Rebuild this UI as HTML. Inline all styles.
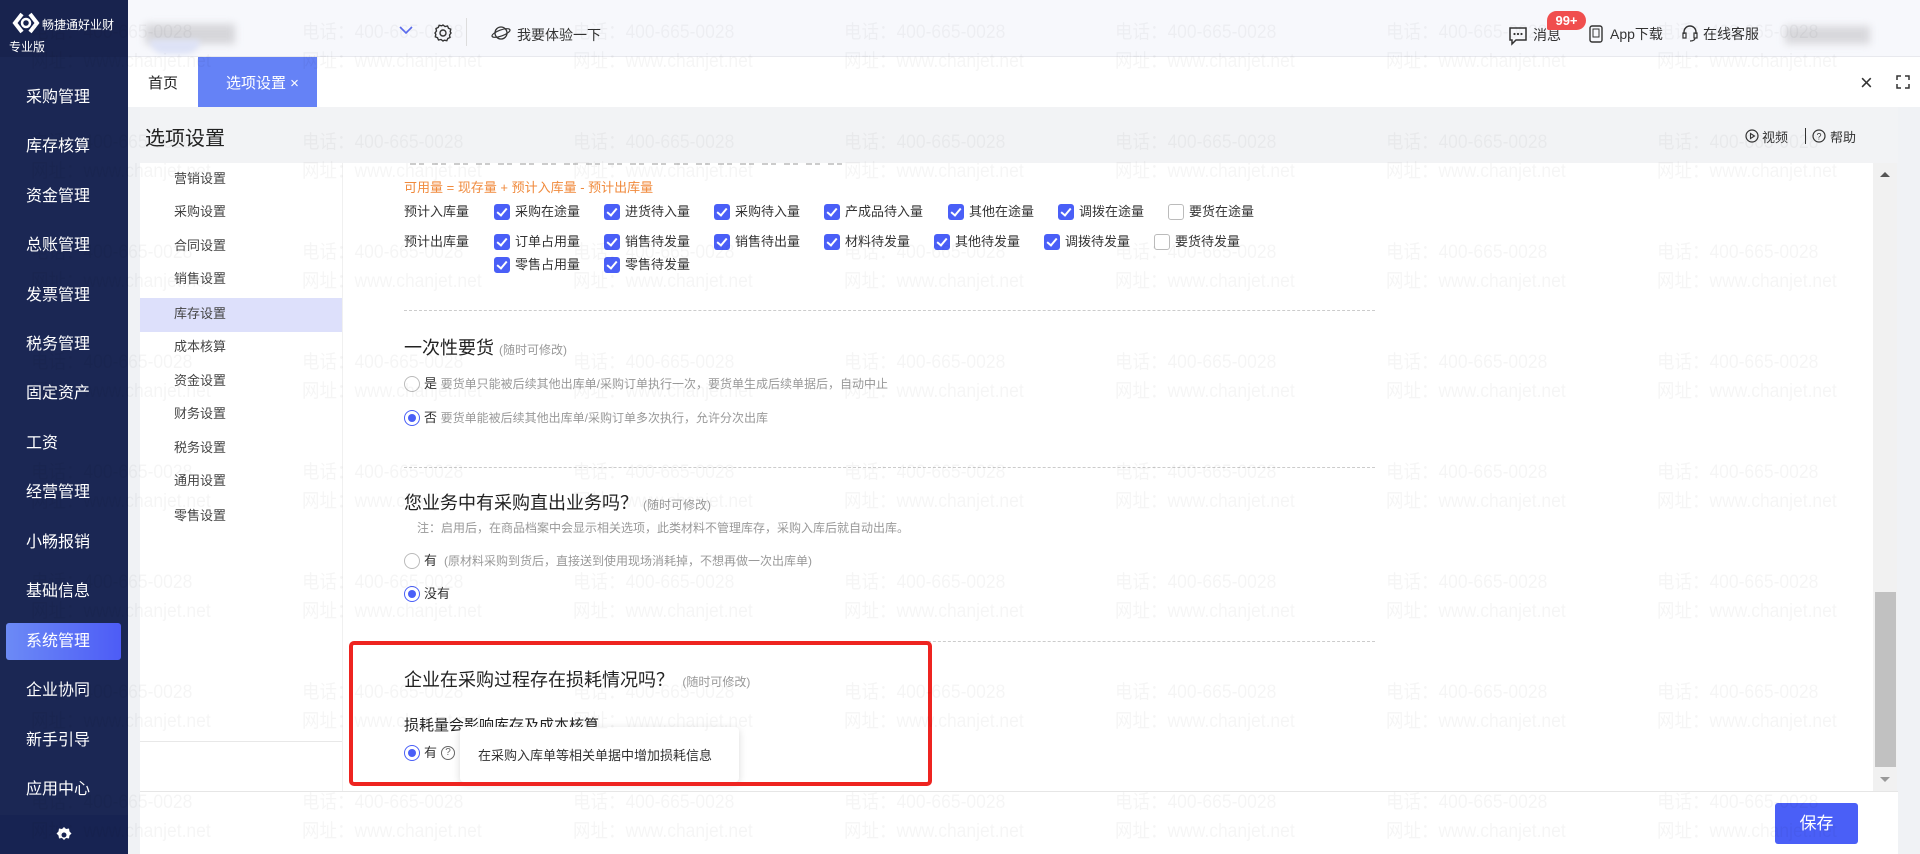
<!DOCTYPE html>
<html><head><meta charset="utf-8">
<style>
*{margin:0;padding:0;box-sizing:border-box}
body{width:1920px;height:854px;overflow:hidden;position:relative;background:#f0f2f5;font-family:"Liberation Sans","Noto Sans CJK SC",sans-serif;color:#333}
.a{position:absolute;white-space:nowrap}
.side{left:0;top:0;width:128px;height:854px;background:#1b2754}
.nav{left:26px;color:#fff;font-size:16px;line-height:20px}
.sub{left:174px;font-size:13px;color:#444;line-height:16px}
.cb{width:16px;height:16px;border-radius:3px;background:#4a5ff7}
.cb::after{content:"";position:absolute;left:5px;top:2px;width:4px;height:8px;border:solid #fff;border-width:0 2px 2px 0;transform:rotate(40deg)}
.cbe{width:16px;height:16px;border-radius:3px;border:1px solid #bbb;background:#fff}
.lb{font-size:13px;color:#333;line-height:16px}
.rd{width:16px;height:16px;border-radius:50%;border:1px solid #bbb;background:#fff}
.rdo{width:16px;height:16px;border-radius:50%;border:1px solid #4a5ff7;background:#fff}
.rdo::after{content:"";position:absolute;left:3px;top:3px;width:8px;height:8px;border-radius:50%;background:#4a5ff7}
.dash{height:0;border-top:1px dashed #ccc}
.wm{font-size:19px;color:rgba(0,0,0,0.04);line-height:29px;transform:scaleX(0.92);transform-origin:0 0}
.h2{font-size:18px;color:#222;line-height:22px}
.hint{font-size:12px;color:#999}
.gray{font-size:12px;color:#999;line-height:16px}
</style></head><body>
<!-- top bar -->
<div class="a" style="left:128px;top:0;width:1792px;height:57px;background:#f7f8fc;border-bottom:1px solid #e8e9ee"></div>
<div class="a" style="left:145px;top:24px;width:90px;height:20px;background:#d6d6da;filter:blur(4px)"></div>
<div class="a" style="left:150px;top:40px;width:50px;height:14px;background:#dde2f6;filter:blur(3px);border-radius:0 0 30px 30px"></div>
<svg class="a" style="left:398px;top:24px" width="16" height="12" viewBox="0 0 16 12"><path d="M2 3l6 6 6-6" fill="none" stroke="#5b6cf0" stroke-width="1.6"/></svg>
<svg class="a" style="left:433px;top:23px" width="20" height="20" viewBox="0 0 20 20"><path d="M10 2l2 1.5 2.5-.5 1 2.2 2.2 1-.5 2.5L18 10l-1.5 2 .5 2.5-2.2 1-1 2.2-2.5-.5L10 18l-2-1.5-2.5.5-1-2.2-2.2-1 .5-2.5L2 10l1.5-2-.5-2.5 2.2-1 1-2.2 2.5.5z" fill="none" stroke="#333" stroke-width="1.4"/><circle cx="10" cy="10" r="3" fill="none" stroke="#333" stroke-width="1.4"/></svg>
<div class="a" style="left:466px;top:18px;width:1px;height:28px;background:#ddd"></div>
<svg class="a" style="left:491px;top:24px" width="20" height="18" viewBox="0 0 20 18"><circle cx="10" cy="9" r="6" fill="none" stroke="#333" stroke-width="1.3"/><ellipse cx="10" cy="9" rx="9.5" ry="3" transform="rotate(-20 10 9)" fill="none" stroke="#333" stroke-width="1.2"/></svg>
<div class="a" style="left:517px;top:25px;font-size:14px;color:#333">我要体验一下</div>
<svg class="a" style="left:1508px;top:26px" width="20" height="20" viewBox="0 0 20 20"><path d="M2 2h16v12H8l-4 4v-4H2z" fill="none" stroke="#333" stroke-width="1.5"/><circle cx="6.5" cy="8" r="1.1" fill="#333"/><circle cx="10" cy="8" r="1.1" fill="#333"/><circle cx="13.5" cy="8" r="1.1" fill="#333"/></svg>
<div class="a" style="left:1533px;top:25px;font-size:14px">消息</div>
<div class="a" style="left:1547px;top:11px;width:39px;height:19px;border-radius:10px 10px 10px 2px;background:#f04e4e;color:#fff;font-size:13px;font-weight:bold;line-height:19px;text-align:center">99+</div>
<svg class="a" style="left:1589px;top:25px" width="14" height="18" viewBox="0 0 14 18"><rect x="1" y="1" width="12" height="16" rx="2" fill="none" stroke="#333" stroke-width="1.4"/><rect x="4" y="4" width="6" height="8" fill="none" stroke="#333" stroke-width="1"/></svg>
<div class="a" style="left:1610px;top:24px;font-size:14px">App下载</div>
<svg class="a" style="left:1682px;top:24px" width="16" height="18" viewBox="0 0 16 18"><path d="M2 10V8a6 6 0 0 1 12 0v2" fill="none" stroke="#333" stroke-width="1.4"/><rect x="1" y="9" width="3" height="5" fill="none" stroke="#333" stroke-width="1.2"/><rect x="12" y="9" width="3" height="5" fill="none" stroke="#333" stroke-width="1.2"/><path d="M13 14q0 3-5 3" fill="none" stroke="#333" stroke-width="1.2"/></svg>
<div class="a" style="left:1703px;top:24px;font-size:14px">在线客服</div>
<div class="a" style="left:1785px;top:26px;width:85px;height:18px;background:#d8d8dc;filter:blur(4px)"></div>
<!-- sidebar -->
<div class="a side"></div>
<div class="a" style="left:0;top:0;width:128px;height:57px;background:#18234e"></div>
<svg class="a" style="left:12px;top:12px" width="28" height="22" viewBox="0 0 28 22"><path d="M10 2L3 11l7 9" fill="none" stroke="#fff" stroke-width="4"/><path d="M18 2l7 9-7 9" fill="none" stroke="#fff" stroke-width="4"/><circle cx="14" cy="11" r="4" fill="none" stroke="#fff" stroke-width="2.5"/></svg>
<div class="a" style="left:42px;top:16px;font-size:12px;color:#fff">畅捷通好业财</div>
<div class="a" style="left:9px;top:38px;font-size:12px;color:#fff">专业版</div>
<div class="a" style="left:6px;top:623px;width:115px;height:37px;border-radius:3px;background:linear-gradient(90deg,#6c8af6,#4d5cf6)"></div>
<div class="a nav" style="top:88px">采购管理</div>
<div class="a nav" style="top:137px">库存核算</div>
<div class="a nav" style="top:187px">资金管理</div>
<div class="a nav" style="top:236px">总账管理</div>
<div class="a nav" style="top:286px">发票管理</div>
<div class="a nav" style="top:335px">税务管理</div>
<div class="a nav" style="top:384px">固定资产</div>
<div class="a nav" style="top:434px">工资</div>
<div class="a nav" style="top:483px">经营管理</div>
<div class="a nav" style="top:533px">小畅报销</div>
<div class="a nav" style="top:582px">基础信息</div>
<div class="a nav" style="top:632px">系统管理</div>
<div class="a nav" style="top:681px">企业协同</div>
<div class="a nav" style="top:731px">新手引导</div>
<div class="a nav" style="top:780px">应用中心</div>
<div class="a" style="left:0;top:815px;width:128px;height:39px;background:#172352"></div>
<svg class="a" style="left:55px;top:826px" width="18" height="18" viewBox="0 0 18 18"><path d="M9 1l2 2 3-.5.5 3 2 2-2 2-.5 3-3-.5-2 2-2-2-3 .5-.5-3-2-2 2-2 .5-3 3 .5z" fill="#fff"/><circle cx="9" cy="9" r="2.5" fill="#172352"/></svg>
<!-- tabs -->
<div class="a" style="left:128px;top:57px;width:1792px;height:50px;background:#fff"></div>
<div class="a" style="left:148px;top:72px;font-size:15px;color:#222">首页</div>
<div class="a" style="left:198px;top:57px;width:119px;height:50px;background:#6582f6"></div>
<div class="a" style="left:226px;top:72px;font-size:15px;color:#fff">选项设置 <span style="font-size:15px">×</span></div>
<div class="a" style="left:1860px;top:70px;font-size:22px;color:#333">×</div>
<svg class="a" style="left:1896px;top:75px" width="14" height="14" viewBox="0 0 14 14"><path d="M1 5V1h4M9 1h4v4M13 9v4H9M5 13H1V9" fill="none" stroke="#333" stroke-width="1.5"/></svg>
<!-- header row -->
<div class="a" style="left:140px;top:107px;width:1758px;height:56px;background:#f2f3f5"></div>
<div class="a" style="left:145px;top:122px;font-size:20px;color:#222">选项设置</div>
<svg class="a" style="left:1745px;top:129px" width="14" height="14" viewBox="0 0 14 14"><circle cx="7" cy="7" r="6" fill="none" stroke="#333" stroke-width="1.2"/><path d="M5.5 4.5v5l4-2.5z" fill="none" stroke="#333" stroke-width="1.1"/></svg>
<div class="a" style="left:1762px;top:127px;font-size:13px">视频</div>
<div class="a" style="left:1805px;top:128px;width:1px;height:16px;background:#333"></div>
<svg class="a" style="left:1812px;top:129px" width="14" height="14" viewBox="0 0 14 14"><circle cx="7" cy="7" r="6" fill="none" stroke="#333" stroke-width="1.2"/><text x="7" y="10.5" font-size="9" text-anchor="middle" fill="#333" font-family="Liberation Sans">?</text></svg>
<div class="a" style="left:1830px;top:127px;font-size:13px">帮助</div>
<!-- content panel -->
<div class="a" style="left:140px;top:163px;width:1733px;height:628px;background:#fff"></div>
<div class="a" style="left:140px;top:741px;width:202px;height:1px;background:#e8e8e8"></div>
<div class="a" style="left:342px;top:163px;width:1px;height:628px;background:#f0f0f0"></div>
<div class="a" style="left:140px;top:298px;width:202px;height:34px;background:#dde0fb"></div>
<div class="a sub" style="top:171px">营销设置</div>
<div class="a sub" style="top:204px">采购设置</div>
<div class="a sub" style="top:238px">合同设置</div>
<div class="a sub" style="top:271px">销售设置</div>
<div class="a sub" style="top:306px">库存设置</div>
<div class="a sub" style="top:339px">成本核算</div>
<div class="a sub" style="top:373px">资金设置</div>
<div class="a sub" style="top:406px">财务设置</div>
<div class="a sub" style="top:440px">税务设置</div>
<div class="a sub" style="top:473px">通用设置</div>
<div class="a sub" style="top:508px">零售设置</div>
<!-- scrolled clipped line -->
<div class="a" style="left:410px;top:163px;width:440px;height:2px;background:repeating-linear-gradient(90deg,#999 0 6px,transparent 6px 9px,#999 9px 14px,transparent 14px 22px);opacity:.5"></div>
<div class="a" style="left:404px;top:177px;font-size:13px;color:#f08a3c">可用量 = 现存量 + 预计入库量 - 预计出库量</div>
<div class="a lb" style="left:404px;top:204px">预计入库量</div>
<div class="a lb" style="left:404px;top:234px">预计出库量</div>
<!-- row1 -->
<div class="a cb" style="left:494px;top:204px"></div><div class="a lb" style="left:515px;top:204px">采购在途量</div>
<div class="a cb" style="left:604px;top:204px"></div><div class="a lb" style="left:625px;top:204px">进货待入量</div>
<div class="a cb" style="left:714px;top:204px"></div><div class="a lb" style="left:735px;top:204px">采购待入量</div>
<div class="a cb" style="left:824px;top:204px"></div><div class="a lb" style="left:845px;top:204px">产成品待入量</div>
<div class="a cb" style="left:948px;top:204px"></div><div class="a lb" style="left:969px;top:204px">其他在途量</div>
<div class="a cb" style="left:1058px;top:204px"></div><div class="a lb" style="left:1079px;top:204px">调拨在途量</div>
<div class="a cbe" style="left:1168px;top:204px"></div><div class="a lb" style="left:1189px;top:204px">要货在途量</div>
<!-- row2 -->
<div class="a cb" style="left:494px;top:234px"></div><div class="a lb" style="left:515px;top:234px">订单占用量</div>
<div class="a cb" style="left:604px;top:234px"></div><div class="a lb" style="left:625px;top:234px">销售待发量</div>
<div class="a cb" style="left:714px;top:234px"></div><div class="a lb" style="left:735px;top:234px">销售待出量</div>
<div class="a cb" style="left:824px;top:234px"></div><div class="a lb" style="left:845px;top:234px">材料待发量</div>
<div class="a cb" style="left:934px;top:234px"></div><div class="a lb" style="left:955px;top:234px">其他待发量</div>
<div class="a cb" style="left:1044px;top:234px"></div><div class="a lb" style="left:1065px;top:234px">调拨待发量</div>
<div class="a cbe" style="left:1154px;top:234px"></div><div class="a lb" style="left:1175px;top:234px">要货待发量</div>
<div class="a cb" style="left:494px;top:257px"></div><div class="a lb" style="left:515px;top:257px">零售占用量</div>
<div class="a cb" style="left:604px;top:257px"></div><div class="a lb" style="left:625px;top:257px">零售待发量</div>
<div class="a dash" style="left:404px;top:310px;width:971px"></div>
<div class="a h2" style="left:404px;top:337px">一次性要货 <span class="hint">(随时可修改)</span></div>
<div class="a rd" style="left:404px;top:376px"></div>
<div class="a lb" style="left:424px;top:376px">是 <span class="gray">要货单只能被后续其他出库单/采购订单执行一次，要货单生成后续单据后，自动中止</span></div>
<div class="a rdo" style="left:404px;top:410px"></div>
<div class="a lb" style="left:424px;top:410px">否 <span class="gray">要货单能被后续其他出库单/采购订单多次执行，允许分次出库</span></div>
<div class="a dash" style="left:404px;top:467px;width:971px"></div>
<div class="a h2" style="left:404px;top:492px">您业务中有采购直出业务吗？ <span class="hint">(随时可修改)</span></div>
<div class="a gray" style="left:417px;top:520px">注：启用后，在商品档案中会显示相关选项，此类材料不管理库存，采购入库后就自动出库。</div>
<div class="a rd" style="left:404px;top:553px"></div>
<div class="a lb" style="left:424px;top:553px">有 <span class="gray">&nbsp;(原材料采购到货后，直接送到使用现场消耗掉，不想再做一次出库单)</span></div>
<div class="a rdo" style="left:404px;top:586px"></div>
<div class="a lb" style="left:424px;top:586px">没有</div>
<div class="a dash" style="left:404px;top:641px;width:971px"></div>
<div class="a h2" style="left:404px;top:669px">企业在采购过程存在损耗情况吗？ <span class="hint">&nbsp;(随时可修改)</span></div>
<div class="a" style="left:404px;top:714px;font-size:15px;color:#222">损耗量会影响库存及成本核算</div>
<div class="a rdo" style="left:404px;top:745px"></div>
<div class="a lb" style="left:424px;top:745px">有</div>
<div class="a" style="left:441px;top:746px;width:14px;height:14px;border:1px solid #666;border-radius:50%;font-size:10px;line-height:12px;text-align:center;color:#666">?</div>
<div class="a" style="left:460px;top:727px;width:279px;height:55px;background:#fff;border-radius:4px;box-shadow:0 2px 8px rgba(0,0,0,0.15)"></div>
<div class="a" style="left:478px;top:745px;font-size:13px;color:#333">在采购入库单等相关单据中增加损耗信息</div>
<div class="a" style="left:349px;top:641px;width:583px;height:145px;border:4px solid #ee2420;border-radius:5px"></div>
<!-- scrollbar -->
<div class="a" style="left:1873px;top:163px;width:24px;height:628px;background:#f1f1f1"></div>
<div class="a" style="left:1875px;top:592px;width:21px;height:175px;background:#c1c1c1"></div>
<div class="a" style="left:1880px;top:172px;width:0;height:0;border:5px solid transparent;border-bottom-color:#555;border-top:0"></div>
<div class="a" style="left:1880px;top:777px;width:0;height:0;border:5px solid transparent;border-top-color:#999;border-bottom:0"></div>
<!-- bottom bar -->
<div class="a" style="left:140px;top:791px;width:1758px;height:63px;background:#fff;border-top:1px solid #e6e6e6"></div>
<div class="a" style="left:1775px;top:803px;width:83px;height:41px;background:#4a5ff7;border-radius:3px;color:#fff;font-size:17px;line-height:41px;text-align:center">保存</div>
<!-- watermark -->
<div class="a" style="left:0;top:0;width:1920px;height:854px;pointer-events:none">
<div class="a wm" style="left:31px;top:18px">电话：400-665-0028<br>网址：www.chanjet.net</div>
<div class="a wm" style="left:302px;top:18px">电话：400-665-0028<br>网址：www.chanjet.net</div>
<div class="a wm" style="left:573px;top:18px">电话：400-665-0028<br>网址：www.chanjet.net</div>
<div class="a wm" style="left:844px;top:18px">电话：400-665-0028<br>网址：www.chanjet.net</div>
<div class="a wm" style="left:1115px;top:18px">电话：400-665-0028<br>网址：www.chanjet.net</div>
<div class="a wm" style="left:1386px;top:18px">电话：400-665-0028<br>网址：www.chanjet.net</div>
<div class="a wm" style="left:1657px;top:18px">电话：400-665-0028<br>网址：www.chanjet.net</div>
<div class="a wm" style="left:31px;top:128px">电话：400-665-0028<br>网址：www.chanjet.net</div>
<div class="a wm" style="left:302px;top:128px">电话：400-665-0028<br>网址：www.chanjet.net</div>
<div class="a wm" style="left:573px;top:128px">电话：400-665-0028<br>网址：www.chanjet.net</div>
<div class="a wm" style="left:844px;top:128px">电话：400-665-0028<br>网址：www.chanjet.net</div>
<div class="a wm" style="left:1115px;top:128px">电话：400-665-0028<br>网址：www.chanjet.net</div>
<div class="a wm" style="left:1386px;top:128px">电话：400-665-0028<br>网址：www.chanjet.net</div>
<div class="a wm" style="left:1657px;top:128px">电话：400-665-0028<br>网址：www.chanjet.net</div>
<div class="a wm" style="left:31px;top:238px">电话：400-665-0028<br>网址：www.chanjet.net</div>
<div class="a wm" style="left:302px;top:238px">电话：400-665-0028<br>网址：www.chanjet.net</div>
<div class="a wm" style="left:573px;top:238px">电话：400-665-0028<br>网址：www.chanjet.net</div>
<div class="a wm" style="left:844px;top:238px">电话：400-665-0028<br>网址：www.chanjet.net</div>
<div class="a wm" style="left:1115px;top:238px">电话：400-665-0028<br>网址：www.chanjet.net</div>
<div class="a wm" style="left:1386px;top:238px">电话：400-665-0028<br>网址：www.chanjet.net</div>
<div class="a wm" style="left:1657px;top:238px">电话：400-665-0028<br>网址：www.chanjet.net</div>
<div class="a wm" style="left:31px;top:348px">电话：400-665-0028<br>网址：www.chanjet.net</div>
<div class="a wm" style="left:302px;top:348px">电话：400-665-0028<br>网址：www.chanjet.net</div>
<div class="a wm" style="left:573px;top:348px">电话：400-665-0028<br>网址：www.chanjet.net</div>
<div class="a wm" style="left:844px;top:348px">电话：400-665-0028<br>网址：www.chanjet.net</div>
<div class="a wm" style="left:1115px;top:348px">电话：400-665-0028<br>网址：www.chanjet.net</div>
<div class="a wm" style="left:1386px;top:348px">电话：400-665-0028<br>网址：www.chanjet.net</div>
<div class="a wm" style="left:1657px;top:348px">电话：400-665-0028<br>网址：www.chanjet.net</div>
<div class="a wm" style="left:31px;top:458px">电话：400-665-0028<br>网址：www.chanjet.net</div>
<div class="a wm" style="left:302px;top:458px">电话：400-665-0028<br>网址：www.chanjet.net</div>
<div class="a wm" style="left:573px;top:458px">电话：400-665-0028<br>网址：www.chanjet.net</div>
<div class="a wm" style="left:844px;top:458px">电话：400-665-0028<br>网址：www.chanjet.net</div>
<div class="a wm" style="left:1115px;top:458px">电话：400-665-0028<br>网址：www.chanjet.net</div>
<div class="a wm" style="left:1386px;top:458px">电话：400-665-0028<br>网址：www.chanjet.net</div>
<div class="a wm" style="left:1657px;top:458px">电话：400-665-0028<br>网址：www.chanjet.net</div>
<div class="a wm" style="left:31px;top:568px">电话：400-665-0028<br>网址：www.chanjet.net</div>
<div class="a wm" style="left:302px;top:568px">电话：400-665-0028<br>网址：www.chanjet.net</div>
<div class="a wm" style="left:573px;top:568px">电话：400-665-0028<br>网址：www.chanjet.net</div>
<div class="a wm" style="left:844px;top:568px">电话：400-665-0028<br>网址：www.chanjet.net</div>
<div class="a wm" style="left:1115px;top:568px">电话：400-665-0028<br>网址：www.chanjet.net</div>
<div class="a wm" style="left:1386px;top:568px">电话：400-665-0028<br>网址：www.chanjet.net</div>
<div class="a wm" style="left:1657px;top:568px">电话：400-665-0028<br>网址：www.chanjet.net</div>
<div class="a wm" style="left:31px;top:678px">电话：400-665-0028<br>网址：www.chanjet.net</div>
<div class="a wm" style="left:302px;top:678px">电话：400-665-0028<br>网址：www.chanjet.net</div>
<div class="a wm" style="left:573px;top:678px">电话：400-665-0028<br>网址：www.chanjet.net</div>
<div class="a wm" style="left:844px;top:678px">电话：400-665-0028<br>网址：www.chanjet.net</div>
<div class="a wm" style="left:1115px;top:678px">电话：400-665-0028<br>网址：www.chanjet.net</div>
<div class="a wm" style="left:1386px;top:678px">电话：400-665-0028<br>网址：www.chanjet.net</div>
<div class="a wm" style="left:1657px;top:678px">电话：400-665-0028<br>网址：www.chanjet.net</div>
<div class="a wm" style="left:31px;top:788px">电话：400-665-0028<br>网址：www.chanjet.net</div>
<div class="a wm" style="left:302px;top:788px">电话：400-665-0028<br>网址：www.chanjet.net</div>
<div class="a wm" style="left:573px;top:788px">电话：400-665-0028<br>网址：www.chanjet.net</div>
<div class="a wm" style="left:844px;top:788px">电话：400-665-0028<br>网址：www.chanjet.net</div>
<div class="a wm" style="left:1115px;top:788px">电话：400-665-0028<br>网址：www.chanjet.net</div>
<div class="a wm" style="left:1386px;top:788px">电话：400-665-0028<br>网址：www.chanjet.net</div>
<div class="a wm" style="left:1657px;top:788px">电话：400-665-0028<br>网址：www.chanjet.net</div>
</div>
</body></html>
